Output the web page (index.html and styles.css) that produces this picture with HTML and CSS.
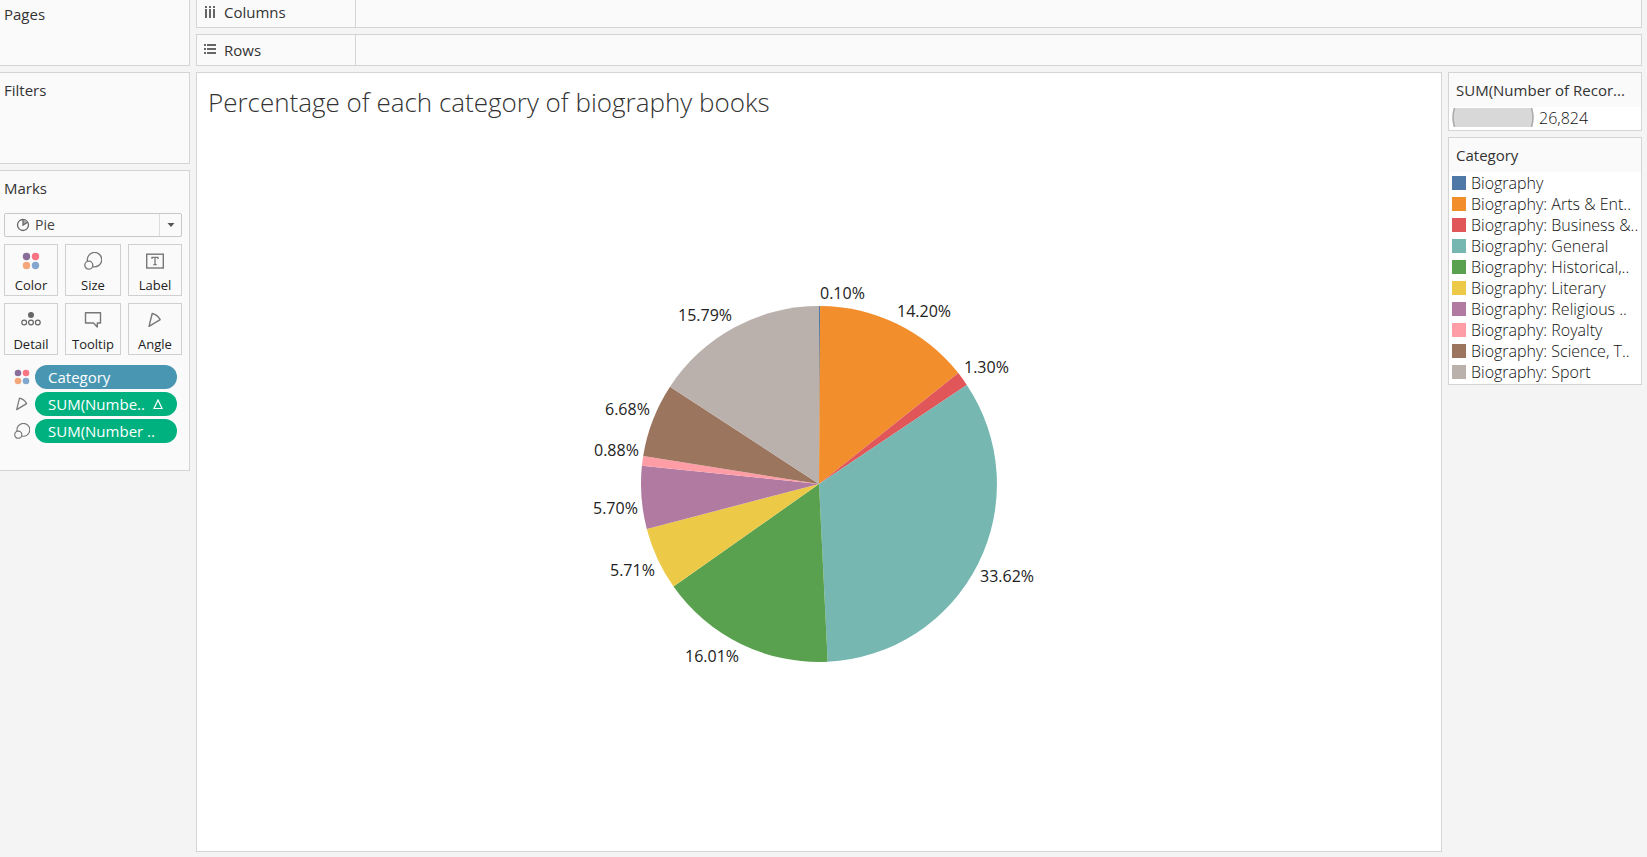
FILE: index.html
```html
<!DOCTYPE html>
<html lang="en">
<head>
<meta charset="utf-8">
<title>Percentage of each category of biography books</title>
<link rel="stylesheet" href="styles.css">
</head>
<body>
<svg class="defs" aria-hidden="true">
  <symbol id="i-color" viewBox="0 0 18 18"><circle cx="4.5" cy="4.5" r="3.7" fill="#8a6e99"/><circle cx="13.5" cy="4.5" r="3.7" fill="#fa7583"/><circle cx="4.5" cy="13.5" r="3.7" fill="#f4a679"/><circle cx="13.5" cy="13.5" r="3.7" fill="#82a6cd"/></symbol>
  <symbol id="i-size" viewBox="0 0 18 18"><g fill="none" stroke="#777" stroke-width="1.3"><path d="M3.5 9.2A7.2 7.2 0 1 1 8.6 14.6"/><circle cx="4.8" cy="13.2" r="4"/></g></symbol>
  <symbol id="i-angle" viewBox="0 0 18 18"><path d="M6.2 2.5L3 15.3L14.2 8.6Q11.5 3.8 6.2 2.5Z" fill="none" stroke="#777" stroke-width="1.4" stroke-linejoin="round"/></symbol>
</svg>
<div class="workspace">
  <aside class="side">
    <section class="card pages"><h2>Pages</h2></section>
    <section class="card filters"><h2>Filters</h2></section>
    <section class="card marks">
      <h2>Marks</h2>
      <div class="mark-type">
        <svg class="pie-icon" viewBox="0 0 14 14" aria-hidden="true"><circle cx="7" cy="7" r="5.5" fill="none" stroke="#666" stroke-width="1.3"/><path d="M7 7V1.500Q10 1.600 11.700 4.200Z" fill="#aaa"/><path d="M7 1.500V7L11.700 4.200" fill="none" stroke="#666" stroke-width="1.300"/></svg>
        <select aria-label="Mark type"><option>Pie</option></select>
        <span class="arrow"><svg viewBox="0 0 8 4" aria-hidden="true"><path d="M0.5 0H7.5L4 4Z" fill="#555"/></svg></span>
      </div>
      <div class="mark-grid">
        <button type="button"><svg viewBox="0 0 18 18"><use href="#i-color"/></svg>Color</button>
        <button type="button"><svg viewBox="0 0 18 18"><use href="#i-size"/></svg>Size</button>
        <button type="button"><svg viewBox="0 0 18 18"><rect x=".7" y="2.2" width="16.6" height="13.8" fill="none" stroke="#777" stroke-width="1.4"/><path d="M6 7V5.4H12V7M9 5.4V12.6M7.3 12.6H10.7" fill="none" stroke="#777" stroke-width="1.3"/></svg>Label</button>
        <button type="button"><svg class="wide" viewBox="0 0 20 18"><circle cx="10" cy="4" r="3" fill="#666"/><g fill="none" stroke="#666" stroke-width="1.2"><circle cx="3.2" cy="11.5" r="2.4"/><circle cx="10" cy="11.5" r="2.4"/><circle cx="16.8" cy="11.5" r="2.4"/></g></svg>Detail</button>
        <button type="button"><svg viewBox="0 0 18 18"><path d="M1.500 1.800H16.500V12H13.300V16L9.500 12H1.500Z" fill="none" stroke="#777" stroke-width="1.400" stroke-linejoin="round"/></svg>Tooltip</button>
        <button type="button"><svg viewBox="0 0 18 18"><use href="#i-angle"/></svg>Angle</button>
      </div>
      <ul class="pills">
        <li><svg viewBox="0 0 18 18"><use href="#i-color"/></svg><button type="button" class="pill dimension">Category</button></li>
        <li><svg viewBox="0 0 18 18"><use href="#i-angle"/></svg><button type="button" class="pill measure">SUM(Numbe..<svg class="delta" viewBox="0 0 10 11" aria-hidden="true"><path d="M5 1L9 9.500H1Z" fill="none" stroke="#fff" stroke-width="1.200"/></svg></button></li>
        <li><svg viewBox="0 0 18 18"><use href="#i-size"/></svg><button type="button" class="pill measure">SUM(Number ..</button></li>
      </ul>
    </section>
  </aside>
  <main class="main">
    <div class="shelf columns"><div class="shelf-name"><svg viewBox="0 0 12 12" fill="#666" aria-hidden="true"><path d="M1 0h2v2H1zM5 0h2v2H5zM9 0h2v2H9zM1 3h2v9H1zM5 3h2v9H5zM9 3h2v9H9z"/></svg>Columns</div></div>
    <div class="shelf"><div class="shelf-name"><svg viewBox="0 0 12 12" fill="#666" aria-hidden="true"><path d="M0 0h2v2H0zM0 4h2v2H0zM0 8h2v2H0zM3 0h9v2H3zM3 4h9v2H3zM3 8h9v2H3z"/></svg>Rows</div></div>
    <div class="content">
      <section class="view">
        <h1>Percentage of each category of biography books</h1>
        <div class="stage">
          <svg class="pie" viewBox="-240 -200 480 400" role="img" aria-label="Pie chart of biography categories">
            <path fill="#4e79a7" d="M0 0V-178A178 178 0 0 1 1.1 -178Z"/>
            <path fill="#f28e2b" d="M0 0L1.1 -178A178 178 0 0 1 139.3 -110.9Z"/>
            <path fill="#e15759" d="M0 0L139.3 -110.9A178 178 0 0 1 147.8 -99.1Z"/>
            <path fill="#76b7b2" d="M0 0L147.8 -99.1A178 178 0 0 1 8.7 177.8Z"/>
            <path fill="#59a14f" d="M0 0L8.7 177.8A178 178 0 0 1 -145.5 102.5Z"/>
            <path fill="#edc948" d="M0 0L-145.5 102.5A178 178 0 0 1 -172.2 44.9Z"/>
            <path fill="#b07aa1" d="M0 0L-172.2 44.9A178 178 0 0 1 -177.1 -18.3Z"/>
            <path fill="#ff9da7" d="M0 0L-177.1 -18.3A178 178 0 0 1 -175.8 -28.1Z"/>
            <path fill="#9c755f" d="M0 0L-175.8 -28.1A178 178 0 0 1 -149 -97.3Z"/>
            <path fill="#bab0ac" d="M0 0L-149 -97.3A178 178 0 0 1 0 -178Z"/>
            <g class="labels">
              <text x="1" y="-185">0.10%</text>
              <text x="78" y="-167">14.20%</text>
              <text x="145" y="-111">1.30%</text>
              <text x="161" y="98">33.62%</text>
              <text x="-134" y="178">16.01%</text>
              <text x="-209" y="92">5.71%</text>
              <text x="-226" y="30">5.70%</text>
              <text x="-225" y="-28">0.88%</text>
              <text x="-214" y="-69">6.68%</text>
              <text x="-141" y="-163">15.79%</text>
            </g>
          </svg>
        </div>
      </section>
      <aside class="legends">
        <section class="legend">
          <h2>SUM(Number of Recor...</h2>
          <div class="size-row"><svg viewBox="0 0 82 19" aria-hidden="true"><path d="M2 0H80Q83 9.500 80 19H2Q-1 9.500 2 0Z" fill="#d8d8d8"/><path d="M2.500 0Q-.4 9.500 2.500 19M79.500 0Q82.400 9.500 79.500 19" fill="none" stroke="#aaa" stroke-width="1.500"/></svg>26,824</div>
        </section>
        <section class="legend">
          <h2>Category</h2>
          <ul class="swatches">
            <li class="c1">Biography</li>
            <li class="c2">Biography: Arts &amp; Ent..</li>
            <li class="c3">Biography: Business &amp;..</li>
            <li class="c4">Biography: General</li>
            <li class="c5">Biography: Historical,..</li>
            <li class="c6">Biography: Literary</li>
            <li class="c7">Biography: Religious ..</li>
            <li class="c8">Biography: Royalty</li>
            <li class="c9">Biography: Science, T..</li>
            <li class="c10">Biography: Sport</li>
          </ul>
        </section>
      </aside>
    </div>
  </main>
</div>
</body>
</html>
```
FILE: styles.css
```css
* { box-sizing: border-box; }
body {
  margin: 0;
  background: #f4f4f4;
  color: #333;
  font: 400 15px/20px "Open Sans", "Noto Sans", sans-serif;
}
h1, h2, ul { margin: 0; padding: 0; font-weight: inherit; list-style: none; }
.defs { position: absolute; width: 0; height: 0; }
.workspace {
  display: grid;
  grid-template-columns: 190px 1fr;
  gap: 6px;
  min-height: 100vh;
  padding: 0 5px 5px 0;
}
.side { display: flex; flex-direction: column; gap: 6px; }
.card {
  padding: 7px 7px 0 4px;
  background: #fafafa;
  border: 1px solid #d4d4d4;
  border-left: 0;
}
.card h2 { font-size: 15px; }
.pages { height: 66px; padding-top: 4px; border-top: 0; }
.filters { height: 92px; }
.marks { padding-bottom: 27px; }

.mark-type {
  display: flex;
  align-items: center;
  position: relative;
  height: 24px;
  margin-top: 15px;
}
.mark-type select {
  flex: 1;
  height: 24px;
  padding: 0 30px;
  appearance: none;
  background: #fafafa;
  border: 1px solid #c8c8c8;
  border-radius: 2px;
  color: #444;
  font: inherit;
  font-size: 14px;
}
.pie-icon { position: absolute; left: 12px; width: 14px; height: 14px; }
.arrow {
  position: absolute;
  right: 1px;
  display: flex;
  align-items: center;
  justify-content: center;
  width: 22px;
  height: 22px;
  border-left: 1px solid #ddd;
  pointer-events: none;
}
.arrow svg { width: 8px; height: 4px; }

.mark-grid {
  display: grid;
  grid-template-columns: 54px 56px 54px;
  gap: 7px;
  margin-top: 7px;
}
.mark-grid button {
  display: flex;
  flex-direction: column;
  align-items: center;
  height: 52px;
  padding: 7px 0 0;
  background: #fafafa;
  border: 1px solid #d0d0d0;
  color: #222;
  font: inherit;
  font-size: 13px;
}
.mark-grid svg { width: 18px; height: 18px; margin-bottom: 5px; }
.mark-grid .wide { width: 20px; }

.pills { display: grid; gap: 3px; margin-top: 10px; padding-right: 5px; }
.pills li { display: flex; align-items: center; gap: 5px; padding-left: 10px; }
.pills li > svg { width: 16px; height: 16px; }
.pill {
  display: flex;
  flex: 1;
  align-items: center;
  gap: 8px;
  height: 24px;
  padding: 0 13px;
  border: 0;
  border-radius: 12px;
  color: #fff;
  font: inherit;
  font-weight: 500;
  white-space: nowrap;
}
.dimension { background: #4996b2; }
.measure { background: #00b180; }
.delta { width: 10px; height: 11px; }

.main { display: flex; flex-direction: column; gap: 6px; min-width: 0; }
.shelf { display: flex; height: 32px; background: #fafafa; border: 1px solid #d4d4d4; }
.shelf-name {
  display: flex;
  align-items: center;
  gap: 8px;
  width: 159px;
  padding-left: 7px;
  border-right: 1px solid #d4d4d4;
}
.shelf-name svg { width: 12px; height: 12px; }
.columns { height: 28px; border-top: 0; }
.columns .shelf-name { padding-bottom: 3px; }

.content { display: grid; flex: 1; grid-template-columns: 1fr 194px; gap: 6px; }
.view {
  display: flex;
  flex-direction: column;
  background: #fff;
  border: 1px solid #d4d4d4;
}
.view h1 {
  padding: 14px 11px 0;
  font-size: 26px;
  font-weight: 300;
  line-height: 30px;
}
.stage {
  display: flex;
  flex: 1;
  align-items: center;
  justify-content: center;
}
.pie { width: 480px; height: 400px; }
.labels { fill: #222; font-size: 16px; }

.legends { display: flex; flex-direction: column; gap: 6px; }
.legend {
  padding-bottom: 2px;
  background: #fff;
  border: 1px solid #d4d4d4;
}
.legend h2 {
  height: 34px;
  padding: 7px 7px 0;
  background: #fafafa;
  font-size: 15px;
  white-space: nowrap;
}
.size-row,
.swatches li {
  display: flex;
  align-items: center;
  gap: 5px;
  height: 21px;
  padding-left: 3px;
  color: #111;
  font-size: 16px;
  font-weight: 300;
  line-height: 18px;
  white-space: nowrap;
}
.size-row svg { width: 82px; height: 19px; }
.swatches li::before { content: ""; width: 14px; height: 14px; background: var(--swatch); }
.c1 { --swatch: #4e79a7; }
.c2 { --swatch: #f28e2b; }
.c3 { --swatch: #e15759; }
.c4 { --swatch: #76b7b2; }
.c5 { --swatch: #59a14f; }
.c6 { --swatch: #edc948; }
.c7 { --swatch: #b07aa1; }
.c8 { --swatch: #ff9da7; }
.c9 { --swatch: #9c755f; }
.c10 { --swatch: #bab0ac; }
```
